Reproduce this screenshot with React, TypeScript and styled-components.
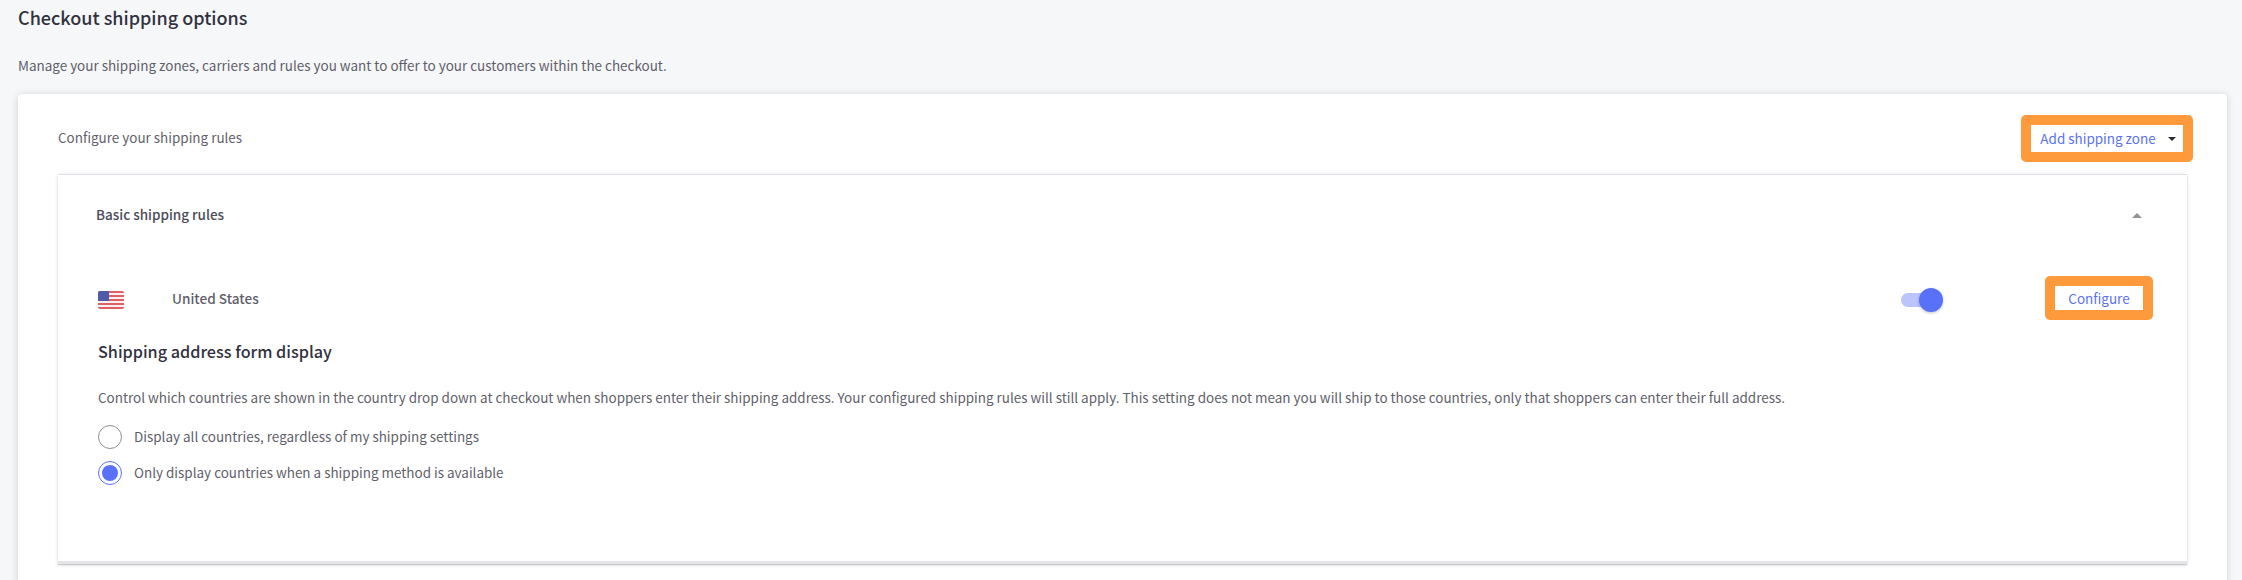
import React, { useState } from "react";
import styled, { createGlobalStyle } from "styled-components";

const GlobalStyle = createGlobalStyle`
  * { box-sizing: border-box; }
  body {
    margin: 0;
    height: 580px;
    overflow: hidden;
    background: #f6f7f9;
    color: #5f5f6b;
    font-family: "Noto Sans CJK SC", "Open Sans", sans-serif;
    font-size: 13.46px;
    line-height: 20px;
  }
`;

const Page = styled.main`
  display: flex;
  flex-direction: column;
  height: 580px;
  padding: 5px 15px 0 18px;
  overflow: hidden;
`;

const PageTitle = styled.h1`
  margin: 0 0 26px;
  font-size: 18px;
  font-weight: 500;
  line-height: 24px;
  color: #313140;
`;

const Text = styled.p`
  margin: 0;
  white-space: nowrap;
`;

const Card = styled.section`
  flex: none;
  height: 520px;
  margin-top: 19px;
  padding: 21px 34px 0 40px;
  background: #fff;
  border-radius: 4px;
  box-shadow: 0 1px 7px rgba(50, 50, 80, 0.2);
`;

const Toolbar = styled.header`
  display: flex;
  align-items: center;
  justify-content: space-between;
  height: 47px;
`;

const ToolbarLabel = styled(Text)`
  padding-bottom: 3px;
`;

const OutlinedButton = styled.button<{ $width: number; $height: number; $padding?: string }>`
  display: flex;
  align-items: center;
  justify-content: center;
  gap: 12px;
  flex: none;
  width: ${(p) => p.$width}px;
  height: ${(p) => p.$height}px;
  padding: ${(p) => p.$padding ?? "0"};
  border: 10px solid #ff9a3c;
  border-radius: 5px;
  background: #fff;
  color: #5a71f5;
  font: inherit;
  white-space: nowrap;
`;

const Caret = styled.svg`
  display: block;
  flex: none;
  margin-top: 2px;
`;

const Panel = styled.section`
  height: 390px;
  margin: 12px 6px 0 0;
  padding: 29px 34px 0 40px;
  background: #fff;
  border-top: 1px solid #dfdfe8;
  border-bottom: 3px solid #e4e4e9;
  box-shadow: 0 1px 1px rgba(0, 0, 0, 0.14), 0 1px 4px rgba(0, 0, 0, 0.14);
`;

const PanelHeader = styled.div`
  display: flex;
  align-items: center;
  justify-content: space-between;
  height: 20px;
  padding: 0 11px 0 0;
  margin-left: -2px;
`;

const PanelTitle = styled.h2`
  margin: 0;
  font-size: 13.5px;
  font-weight: 500;
  line-height: 20px;
  color: #4b4b5a;
`;

const ZoneRow = styled.div`
  display: flex;
  align-items: center;
  height: 44px;
  margin-top: 52px;
`;

const Flag = styled.svg`
  flex: none;
  margin: 4px 48px 0 0;
`;

const CountryName = styled.span`
  flex: 1;
  font-size: 13.6px;
  font-weight: 500;
`;

const Switch = styled.button`
  display: flex;
  align-items: center;
  flex: none;
  width: 42px;
  height: 24px;
  margin: 4px 102px 0 0;
  padding: 0;
  border: 0;
  background: none;
`;

const SwitchTrack = styled.span`
  display: flex;
  align-items: center;
  justify-content: flex-end;
  width: 34px;
  height: 14px;
  border-radius: 7px;
  background: #bbc5fb;
`;

const SwitchThumb = styled.span`
  flex: none;
  width: 24px;
  height: 24px;
  margin-right: -8px;
  border-radius: 50%;
  background: #5971f8;
  box-shadow: 0 1px 3px rgba(0, 0, 0, 0.24);
`;

const SectionTitle = styled.h3`
  margin: 19px 0 24px;
  font-size: 16.2px;
  font-weight: 500;
  line-height: 24px;
  color: #313140;
`;

const RadioGroup = styled.div`
  display: flex;
  flex-direction: column;
  gap: 12px;
  margin-top: 18px;
`;

const RadioOption = styled.label`
  display: flex;
  align-items: center;
  gap: 12px;
  height: 24px;
`;

const RadioLabel = styled.span`
  padding-bottom: 2px;
`;

const RadioMark = styled.input`
  appearance: none;
  flex: none;
  width: 24px;
  height: 24px;
  margin: 0;
  padding: 3px;
  border: 1px solid #8f8f94;
  border-radius: 50%;
  background: #fff;

  &:checked {
    border-color: #5971f8;
    background: #5971f8 content-box;
  }
`;

const UnitedStatesFlag = () => (
  <Flag width="26" height="18" viewBox="0 0 26 18">
    <clipPath id="flag-corners">
      <rect width="26" height="18" rx="2" />
    </clipPath>
    <g clipPath="url(#flag-corners)">
      <rect width="26" height="18" fill="#f9f0f1" />
      <path d="M0 1h26M0 5h26M0 9h26M0 13h26M0 17h26" stroke="#e06065" strokeWidth="2" />
      <rect width="11" height="10" fill="#4f5aa8" />
    </g>
  </Flag>
);

const options = [
  { id: "all", label: "Display all countries, regardless of my shipping settings" },
  { id: "available", label: "Only display countries when a shipping method is available" },
];

export default function App() {
  const [selected, setSelected] = useState("available");
  return (
    <>
      <GlobalStyle />
      <Page>
        <PageTitle>Checkout shipping options</PageTitle>
        <Text>Manage your shipping zones, carriers and rules you want to offer to your customers within the checkout.</Text>
        <Card>
          <Toolbar>
            <ToolbarLabel>Configure your shipping rules</ToolbarLabel>
            <OutlinedButton $width={172} $height={47} $padding="0 0 1px 2px">
              Add shipping zone
              <Caret width="8" height="4" viewBox="0 0 8 4">
                <path d="M0 0h8L4 4z" fill="#2b2b3a" />
              </Caret>
            </OutlinedButton>
          </Toolbar>
          <Panel>
            <PanelHeader>
              <PanelTitle>Basic shipping rules</PanelTitle>
              <Caret width="10" height="5" viewBox="0 0 10 5">
                <path d="M0 5h10L5 0z" fill="#939396" />
              </Caret>
            </PanelHeader>
            <ZoneRow>
              <UnitedStatesFlag />
              <CountryName>United States</CountryName>
              <Switch role="switch" aria-checked="true" aria-label="United States">
                <SwitchTrack>
                  <SwitchThumb />
                </SwitchTrack>
              </Switch>
              <OutlinedButton $width={108} $height={44}>Configure</OutlinedButton>
            </ZoneRow>
            <SectionTitle>Shipping address form display</SectionTitle>
            <Text>
              Control which countries are shown in the country drop down at checkout when shoppers enter their shipping
              address. Your configured shipping rules will still apply. This setting does not mean you will ship to
              those countries, only that shoppers can enter their full address.
            </Text>
            <RadioGroup>
              {options.map((option) => (
                <RadioOption key={option.id}>
                  <RadioMark
                    type="radio"
                    name="country-display"
                    checked={selected === option.id}
                    onChange={() => setSelected(option.id)}
                  />
                  <RadioLabel>{option.label}</RadioLabel>
                </RadioOption>
              ))}
            </RadioGroup>
          </Panel>
        </Card>
      </Page>
    </>
  );
}
